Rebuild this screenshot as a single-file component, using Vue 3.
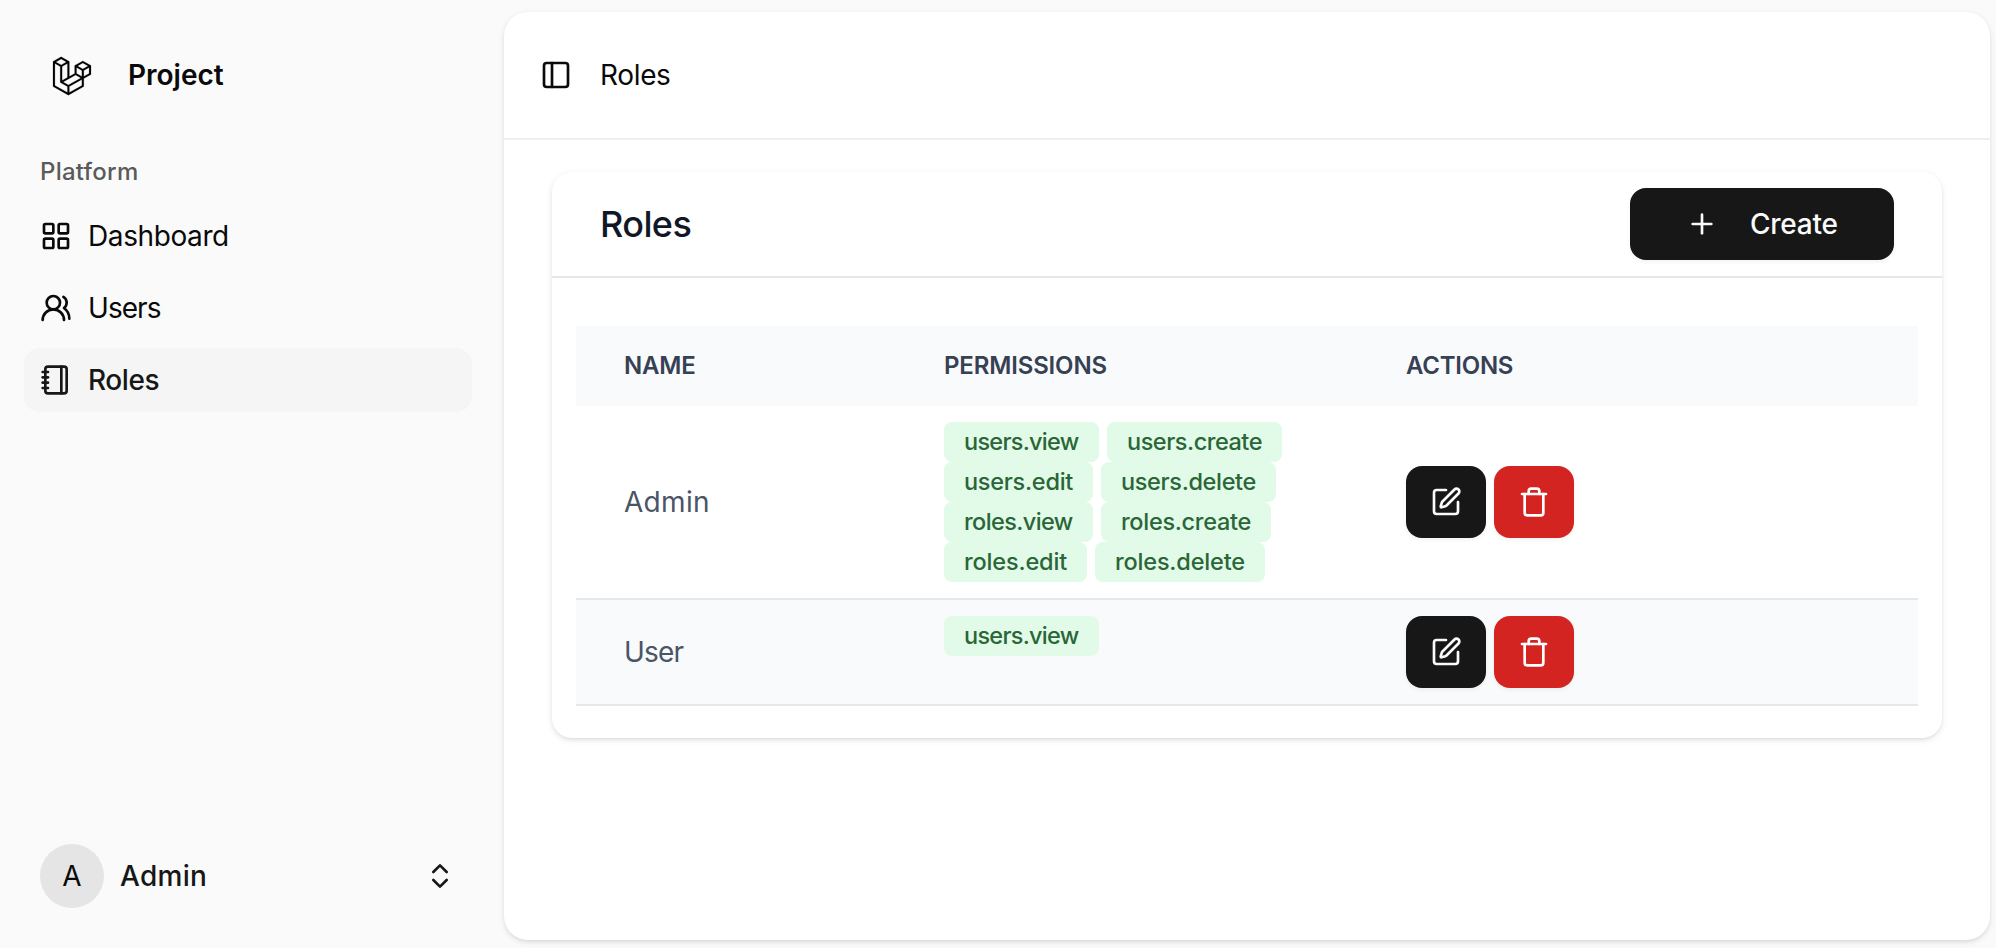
<script setup>
const roles = [
  {
    name: 'Admin',
    cls: 'name-admin',
    rows: [
      [{ t: 'users.view', w: 155, s: -0.74 }, { t: 'users.create', w: 175, s: -0.47 }],
      [{ t: 'users.edit', w: 149, s: -0.27 }, { t: 'users.delete', w: 175, s: -0.34 }],
      [{ t: 'roles.view', w: 149, s: -0.6 }, { t: 'roles.create', w: 170, s: -0.29 }],
      [{ t: 'roles.edit', w: 143, s: -0.16 }, { t: 'roles.delete', w: 170, s: -0.17 }],
    ],
  },
  {
    name: 'User',
    cls: 'name-user',
    rows: [[{ t: 'users.view', w: 155, s: -0.74 }]],
  },
]
</script>

<template>
  <div class="app">
    <aside class="sidebar">
      <a class="brand">
        <svg class="logo" viewBox="0 0 40 42" fill="currentColor">
          <path fill-rule="evenodd" clip-rule="evenodd" d="M17.2 5.633 8.6.855 0 5.633v26.51l16.2 9 16.2-9v-8.442l7.6-4.223V9.856l-8.6-4.777-8.6 4.777V18.3l-5.6 3.111V5.633ZM38 18.301l-5.6 3.11v-6.157l5.6-3.11V18.3Zm-1.06-7.856-5.54 3.078-5.54-3.079 5.54-3.078 5.54 3.079ZM24.8 18.3v-6.157l5.6 3.111v6.158L24.8 18.3Zm-1 1.732 5.54 3.078-13.14 7.302-5.54-3.078 13.14-7.3v-.002Zm-16.2 7.89 7.6 4.222V38.3L2 30.966V7.92l5.6 3.111v16.892ZM8.6 9.3 3.06 6.222 8.6 3.143l5.54 3.08L8.6 9.3Zm21.8 15.51-13.2 7.334V38.3l13.2-7.334v-6.156ZM9.6 11.034l5.6-3.11v14.6l-5.6 3.11v-14.6Z" />
        </svg>
        <span class="brand-name">Project</span>
      </a>
      <div class="group-label">Platform</div>
      <nav class="nav">
        <a class="nav-item">
          <svg class="icon" viewBox="0 0 24 24">
            <rect width="7" height="7" x="3" y="3" rx="1" />
            <rect width="7" height="7" x="14" y="3" rx="1" />
            <rect width="7" height="7" x="14" y="14" rx="1" />
            <rect width="7" height="7" x="3" y="14" rx="1" />
          </svg>
          <span class="t-dashboard">Dashboard</span>
        </a>
        <a class="nav-item">
          <svg class="icon" viewBox="0 0 24 24">
            <path d="M18 21a8 8 0 0 0-16 0" />
            <circle cx="10" cy="8" r="5" />
            <path d="M22 20c0-3.37-2-6.5-4-8a5 5 0 0 0-.45-8.3" />
          </svg>
          <span class="t-users">Users</span>
        </a>
        <a class="nav-item active">
          <svg class="icon" viewBox="0 0 24 24">
            <path d="M2 6h4" /><path d="M2 10h4" /><path d="M2 14h4" /><path d="M2 18h4" />
            <rect width="16" height="20" x="4" y="2" rx="2" />
            <path d="M16 2v20" />
          </svg>
          <span class="t-roles">Roles</span>
        </a>
      </nav>
      <div class="user">
        <span class="avatar">A</span>
        <span class="user-name">Admin</span>
        <svg class="icon" viewBox="0 0 24 24">
          <path d="m7 15 5 5 5-5" /><path d="m7 9 5-5 5 5" />
        </svg>
      </div>
    </aside>

    <main class="panel">
      <header class="topbar">
        <svg class="icon" viewBox="0 0 24 24">
          <rect width="18" height="18" x="3" y="3" rx="2" /><path d="M9 3v18" />
        </svg>
        <span class="crumb">Roles</span>
      </header>
      <section class="card">
        <div class="card-head">
          <h1>Roles</h1>
          <button class="btn create">
            <svg class="icon" viewBox="0 0 24 24"><path d="M5 12h14" /><path d="M12 5v14" /></svg>
            <span>Create</span>
          </button>
        </div>
        <div class="table">
          <div class="row head">
            <div class="h-name">NAME</div>
            <div class="h-perm">PERMISSIONS</div>
            <div class="h-act">ACTIONS</div>
          </div>
          <div v-for="role in roles" :key="role.name" class="row">
            <div :class="['name', role.cls]">{{ role.name }}</div>
            <div class="perms">
              <div v-for="(line, i) in role.rows" :key="i" class="line">
                <span
                  v-for="p in line"
                  :key="p.t"
                  class="badge"
                  :style="{ width: p.w + 'px', letterSpacing: p.s + 'px' }"
                >{{ p.t }}</span>
              </div>
            </div>
            <div class="actions">
              <button class="btn">
                <svg class="icon" viewBox="0 0 24 24">
                  <path d="M12 3H5a2 2 0 0 0-2 2v14a2 2 0 0 0 2 2h14a2 2 0 0 0 2-2v-7" />
                  <path d="M18.375 2.625a1 1 0 0 1 3 3l-9.013 9.014a2 2 0 0 1-.853.505l-2.873.84a.5.5 0 0 1-.62-.62l.84-2.873a2 2 0 0 1 .506-.852z" />
                </svg>
              </button>
              <button class="btn danger">
                <svg class="icon" viewBox="0 0 24 24">
                  <path d="M3 6h18" />
                  <path d="M19 6v14a2 2 0 0 1-2 2H7a2 2 0 0 1-2-2V6" />
                  <path d="M8 6V4a2 2 0 0 1 2-2h4a2 2 0 0 1 2 2v2" />
                </svg>
              </button>
            </div>
          </div>
        </div>
      </section>
    </main>
  </div>
</template>

<style>
body {
  margin: 0;
  background: #fafafa;
}
</style>

<style scoped>
.app {
  box-sizing: border-box;
  display: flex;
  height: 948px;
  font-family: Inter, "Liberation Sans", sans-serif;
  font-size: 28px;
  font-weight: 400;
  line-height: 40px;
  color: #0a0a0a;
  background: #fafafa;
}
.app *,
.app *::before {
  box-sizing: border-box;
}
.icon {
  width: 32px;
  height: 32px;
  flex: none;
  fill: none;
  stroke: currentColor;
  stroke-width: 2;
  stroke-linecap: round;
  stroke-linejoin: round;
}
.sidebar {
  width: 504px;
  flex: none;
  display: flex;
  flex-direction: column;
  padding: 24px 32px 24px 24px;
}
.brand {
  display: flex;
  align-items: center;
  height: 104px;
  padding-left: 29px;
}
.logo {
  width: 38px;
  height: 40px;
  flex: none;
  overflow: visible;
  color: #000;
  stroke: currentColor;
  stroke-width: 0.2;
}
.brand-name {
  margin: -3px 0 0 37px;
  font-weight: 600;
}
.group-label {
  height: 64px;
  margin-top: 12px;
  padding-left: 16px;
  font-size: 24px;
  font-weight: 500;
  line-height: 64px;
  letter-spacing: 0.25px;
  color: #5a5a5a;
}
.nav {
  display: flex;
  flex-direction: column;
  gap: 8px;
}
.nav-item {
  display: flex;
  align-items: center;
  gap: 16px;
  height: 64px;
  padding: 0 16px;
  border-radius: 16px;
}
.nav-item.active {
  background: #f5f5f5;
  color: #171717;
  font-weight: 500;
}
.t-dashboard { letter-spacing: -0.4px; }
.t-users { letter-spacing: -0.95px; }
.t-roles { letter-spacing: -0.4px; }
.user {
  display: flex;
  align-items: center;
  height: 96px;
  margin-top: auto;
  padding: 0 16px;
  color: #171717;
}
.avatar {
  width: 64px;
  height: 64px;
  border-radius: 50%;
  background: #e5e5e5;
  color: #0a0a0a;
  line-height: 64px;
  text-align: center;
}
.user-name {
  flex: 1;
  margin-left: 16px;
  font-weight: 500;
  letter-spacing: 0.3px;
}
.panel {
  flex: 1;
  margin: 12px 6px 8px 0;
  border-radius: 24px;
  background: #fff;
  box-shadow: 0 2px 6px rgba(0, 0, 0, 0.1), 0 2px 4px -2px rgba(0, 0, 0, 0.1);
}
.topbar {
  display: flex;
  align-items: center;
  height: 128px;
  padding-left: 36px;
  border-bottom: 2px solid #efefef;
}
.crumb {
  margin-left: 28px;
  letter-spacing: -0.35px;
}
.card {
  margin: 32px 48px 0;
  padding-bottom: 32px;
  border-radius: 20px;
  background: #fff;
  box-shadow: 0 2px 6px rgba(0, 0, 0, 0.1), 0 2px 4px -2px rgba(0, 0, 0, 0.1);
}
.card-head {
  display: flex;
  align-items: center;
  justify-content: space-between;
  height: 106px;
  padding: 0 48px;
  border-bottom: 2px solid #e5e7eb;
}
h1 {
  margin: 0;
  font-size: 36px;
  font-weight: 500;
  letter-spacing: -0.6px;
  color: #101828;
}
.btn {
  display: flex;
  align-items: center;
  justify-content: center;
  width: 80px;
  height: 72px;
  margin: 0;
  padding: 0;
  border: 0;
  border-radius: 16px;
  background: #171717;
  color: #fafafa;
  font: inherit;
  box-shadow: 0 2px 4px rgba(0, 0, 0, 0.05);
}
.btn.create {
  width: 264px;
  justify-content: flex-start;
  padding-left: 56px;
  font-weight: 500;
  letter-spacing: -0.25px;
}
.btn.create span {
  margin-left: 32px;
}
.btn.danger {
  background: #d42422;
  color: #fff;
}
.table {
  margin: 48px 24px 0;
}
.row {
  display: grid;
  grid-template-columns: 320px 462px 1fr;
  align-items: center;
  padding: 16px 0;
  border-bottom: 2px solid #e5e7eb;
}
.row > div {
  padding-left: 48px;
}
.row:nth-child(odd) {
  background: #f9fafc;
}
.row.head {
  height: 80px;
  padding: 0;
  border: 0;
  font-size: 24px;
  font-weight: 600;
  color: #364153;
}
.h-name { letter-spacing: -0.2px; }
.h-perm { letter-spacing: -0.15px; }
.h-act { letter-spacing: -0.25px; }
.name {
  color: #4a5565;
}
.name-admin { letter-spacing: 0.3px; }
.name-user { letter-spacing: -0.8px; }
.perms {
  align-self: start;
}
.line {
  display: flex;
  gap: 8px;
}
.badge {
  height: 40px;
  padding-left: 20px;
  border-radius: 8px;
  background: #e1fbe8;
  color: #2a6637;
  font-size: 23.5px;
  font-weight: 500;
  line-height: 40px;
  white-space: nowrap;
}
.actions {
  display: flex;
  gap: 8px;
}
</style>
